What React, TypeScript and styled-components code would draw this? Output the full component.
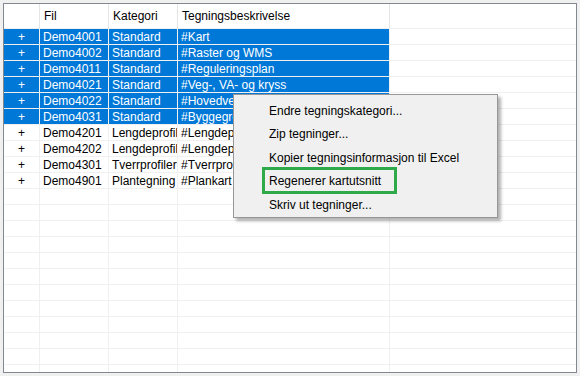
import styled, { createGlobalStyle } from "styled-components";

const GlobalStyle = createGlobalStyle`
  html, body {
    margin: 0;
    padding: 0;
    background: #f0f0f0;
  }
  body {
    font-family: "Liberation Sans", Arial, sans-serif;
    font-size: 12px;
  }
`;

const Page = styled.div`
  position: relative;
  width: 580px;
  height: 376px;
  padding: 3px;
  box-sizing: border-box;
`;

const Frame = styled.div`
  height: 100%;
  border: 1px solid #828790;
  background: #fff;
  box-sizing: border-box;
  overflow: hidden;
`;

const COLS = "36px 69px 69px 212px 1fr";

const HeaderRow = styled.div`
  display: grid;
  grid-template-columns: ${COLS};
  height: 24px;
  color: #000;
`;

const HeaderCell = styled.div`
  display: flex;
  align-items: center;
  padding-left: 4px;
  border-right: 1px solid #e5e5e5;
  &:last-child {
    border-right: none;
  }
`;

const Row = styled.div<{ $selected?: boolean }>`
  display: grid;
  grid-template-columns: ${COLS};
  height: 16px;
  color: ${(p) => (p.$selected ? "#fff" : "#000")};
`;

const Cell = styled.div<{ $selected?: boolean; $center?: boolean }>`
  display: flex;
  align-items: center;
  justify-content: ${(p) => (p.$center ? "center" : "flex-start")};
  padding-left: ${(p) => (p.$center ? "0" : "3px")};
  height: 15px;
  border-right: 1px solid #f0f0f0;
  border-bottom: 1px solid #f0f0f0;
  background: ${(p) => (p.$selected ? "#0078d7" : "transparent")};
  white-space: nowrap;
  overflow: hidden;
  &:last-child {
    border-right: none;
  }
`;

const Body = styled.div`
  border-top: 1px solid #f0f0f0;
`;

const Menu = styled.div`
  position: absolute;
  left: 233px;
  top: 94px;
  width: 265px;
  padding: 4px 2px 0;
  box-sizing: border-box;
  background: #f0f0f0;
  border: 1px solid #979797;
  box-shadow: 3px 3px 3px rgba(0, 0, 0, 0.3);
  font-size: 12px;
  color: #000;
`;

const MenuItem = styled.div`
  position: relative;
  height: 23.5px;
  display: flex;
  align-items: center;
  padding-left: 33px;
  white-space: nowrap;
`;

const Marker = styled.div`
  position: absolute;
  left: 26px;
  top: -3px;
  width: 129px;
  height: 21px;
  border: 3px solid #2eaa4a;
`;

type Drawing = {
  fil: string;
  kategori: string;
  beskrivelse: string;
  selected?: boolean;
};

const drawings: Drawing[] = [
  { fil: "Demo4001", kategori: "Standard", beskrivelse: "#Kart", selected: true },
  { fil: "Demo4002", kategori: "Standard", beskrivelse: "#Raster og WMS", selected: true },
  { fil: "Demo4011", kategori: "Standard", beskrivelse: "#Reguleringsplan", selected: true },
  { fil: "Demo4021", kategori: "Standard", beskrivelse: "#Veg-, VA- og kryss", selected: true },
  { fil: "Demo4022", kategori: "Standard", beskrivelse: "#Hovedveg", selected: true },
  { fil: "Demo4031", kategori: "Standard", beskrivelse: "#Byggegrop", selected: true },
  { fil: "Demo4201", kategori: "Lengdeprofil", beskrivelse: "#Lengdeprofil" },
  { fil: "Demo4202", kategori: "Lengdeprofil", beskrivelse: "#Lengdeprofil" },
  { fil: "Demo4301", kategori: "Tverrprofiler", beskrivelse: "#Tverrprofil" },
  { fil: "Demo4901", kategori: "Plantegning", beskrivelse: "#Plankart" },
];

const menuItems = [
  "Endre tegningskategori...",
  "Zip tegninger...",
  "Kopier tegningsinformasjon til Excel",
  "Regenerer kartutsnitt",
  "Skriv ut tegninger...",
];

const EMPTY_ROWS = 12;

export default function App() {
  return (
    <Page>
      <GlobalStyle />
      <Frame>
        <HeaderRow>
          <HeaderCell />
          <HeaderCell>Fil</HeaderCell>
          <HeaderCell>Kategori</HeaderCell>
          <HeaderCell>Tegningsbeskrivelse</HeaderCell>
          <HeaderCell />
        </HeaderRow>
        <Body>
          {drawings.map((d) => (
            <Row key={d.fil} $selected={d.selected}>
              <Cell $selected={d.selected} $center>
                +
              </Cell>
              <Cell $selected={d.selected}>{d.fil}</Cell>
              <Cell $selected={d.selected}>{d.kategori}</Cell>
              <Cell $selected={d.selected}>{d.beskrivelse}</Cell>
              <Cell />
            </Row>
          ))}
          {Array.from({ length: EMPTY_ROWS }).map((_, i) => (
            <Row key={"empty" + i}>
              <Cell />
              <Cell />
              <Cell />
              <Cell />
              <Cell />
            </Row>
          ))}
        </Body>
      </Frame>
      <Menu>
        {menuItems.map((m, i) => (
          <MenuItem key={m}>
            {m}
            {i === 3 && <Marker />}
          </MenuItem>
        ))}
      </Menu>
    </Page>
  );
}
